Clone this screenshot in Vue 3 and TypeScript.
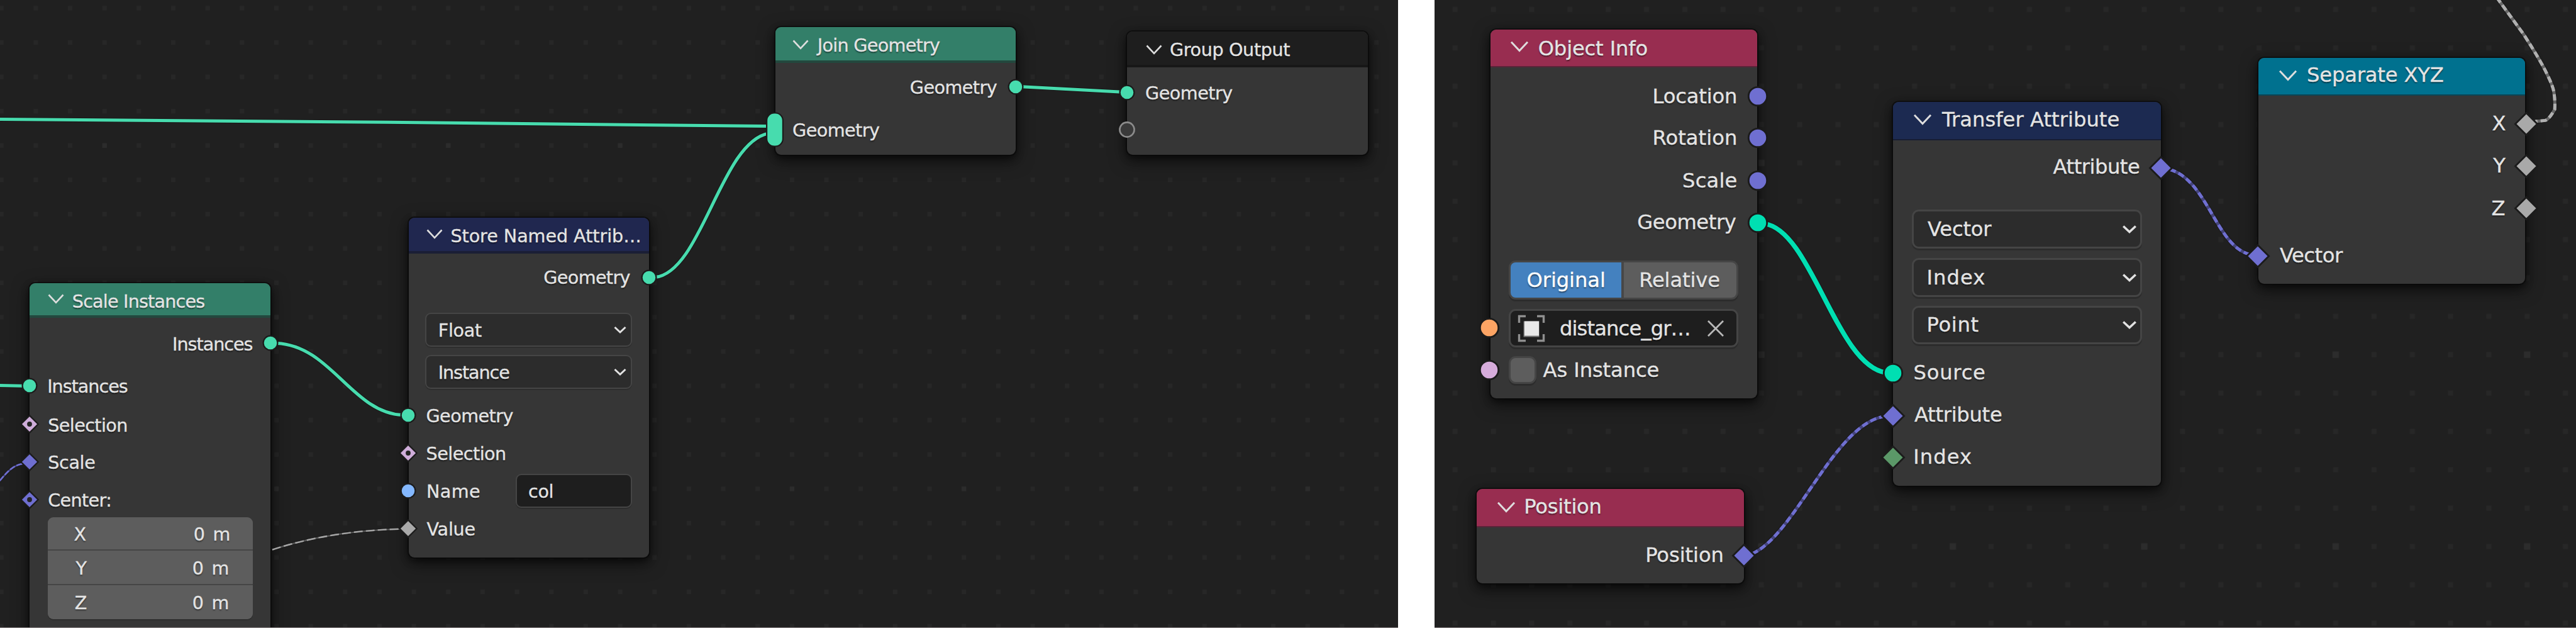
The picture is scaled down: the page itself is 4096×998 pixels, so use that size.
<script setup lang="ts">
type Shape = 'circle' | 'diamond' | 'hollow' | 'pill' | 'empty'
type Kind = 'text' | 'select' | 'stack' | 'name' | 'toggle' | 'object' | 'check'

/** A piece of text: left edge and width of its ink, in canvas pixels. */
interface Label { t: string; x: number; w: number }
interface Socket { x: number; y: number; shape: Shape; color: string }
interface Row { kind: Kind; cy: number; h: number; labels: Label[]; box?: [number, number]; values?: { cy: number; a: Label; b: Label }[] }
interface GraphNode {
  x: number; y: number; w: number; h: number; head: number; color: string; edge: string
  title: Label; titleY: number; chev: [number, number]; rows: Row[]; sockets: Socket[]
}
interface Link { d: string; color: string; width: number; dash?: string; base?: string }
interface Board {
  id: string; left: number; width: number; font: number; node: GraphNode[]; links: Link[]
  grid: { x: number; y: number; px: number; py: number; size: number; ex: number; ey: number; big: number }
}

const MINT = '#47dcae', JADE = '#00dfb2', VIOLET = '#6f6fd1', PINK = '#cfadda', GREY = '#a9a9a9'
const ctx = document.createElement('canvas').getContext('2d')!

function ink(l: Label, size: number, origin: number) {
  ctx.font = `${size}px "DejaVu Sans"`
  const m = ctx.measureText(l.t)
  const natural = m.actualBoundingBoxLeft + m.actualBoundingBoxRight
  const gap = l.t.length > 1 ? (l.w - natural) / (l.t.length - 1) : 0
  return {
    marginLeft: `${l.x - origin}px`,
    width: `${l.w}px`,
    textIndent: `${m.actualBoundingBoxLeft}px`,
    letterSpacing: `${gap}px`,
  }
}

function rowStyle(n: GraphNode, i: number) {
  const r = n.rows[i]
  const prev = i === 0 ? n.y + n.head : n.rows[i - 1].cy + n.rows[i - 1].h / 2
  return { marginTop: `${r.cy - r.h / 2 - prev}px`, height: `${r.h}px` }
}
const boxStyle = (n: GraphNode, r: Row) => ({ marginLeft: `${r.box![0] - n.x}px`, width: `${r.box![1]}px` })

const text = (t: string, x: number, w: number, cy: number): Row => ({ kind: 'text', cy, h: 38, labels: [{ t, x, w }] })
const select = (t: string, x: number, w: number, cy: number, h: number, bx: number, bw: number): Row =>
  ({ kind: 'select', cy, h, labels: [{ t, x, w }], box: [bx, bw] })
const sock = (x: number, y: number, shape: Shape, color: string): Socket => ({ x, y, shape, color })

const boards: Board[] = [
  {
    id: 'left', left: 0, width: 2223, font: 28.6,
    grid: { x: 2.2, y: 13, px: 54.66, py: 54.56, size: 7, ex: 3, ey: 4, big: 7 },
    links: [
      { d: 'M-10 189.5 C300 190.8 900 197 1222 200.5', color: MINT, width: 5 },
      { d: 'M-10 612.2 L47 613.4', color: MINT, width: 5 },
      { d: 'M440 545.4 C526 549 560 656 640 659.6', color: MINT, width: 5 },
      { d: 'M1042 440.6 C1116 432 1146 226 1222 212', color: MINT, width: 5 },
      { d: 'M1624 137.8 L1784 146.3', color: MINT, width: 5 },
      { d: 'M-8 773 C6 757 18 738 38 737', color: VIOLET, width: 2.6, base: '#4c4c8c', dash: '9 3' },
      { d: 'M433 873.6 C490 855 560 842 642 840.6', color: '#a4a4a4', width: 2.4, base: '#565656', dash: '14 5' },
    ],
    node: [
      {
        x: 47.4, y: 449.5, w: 382.4, h: 600, head: 55.5, color: '#337f69', edge: '#23483e',
        title: { t: 'Scale Instances', x: 115.8, w: 209.5 }, titleY: 477.6, chev: [88.8, 475.4],
        rows: [
          text('Instances', 276, 125.6, 546), text('Instances', 77.2, 125.6, 612.7), text('Selection', 77.2, 124, 674.6),
          text('Scale', 77.2, 74, 734.4), text('Center:', 77.2, 98, 794.4),
          {
            kind: 'stack', cy: 903.5, h: 162, labels: [], box: [76.4, 325.4],
            values: [
              { cy: 849, a: { t: 'X', x: 117.4, w: 19.5 }, b: { t: '0 m', x: 308.8, w: 55.6 } },
              { cy: 902, a: { t: 'Y', x: 119.4, w: 19.5 }, b: { t: '0 m', x: 306.8, w: 55.6 } },
              { cy: 956.5, a: { t: 'Z', x: 119.8, w: 19.5 }, b: { t: '0 m', x: 306.8, w: 55.6 } },
            ],
          },
        ],
        sockets: [
          sock(429.8, 545, 'circle', MINT), sock(47.2, 613.4, 'circle', MINT), sock(47.2, 673.9, 'hollow', PINK),
          sock(47.2, 734, 'diamond', VIOLET), sock(47.2, 794, 'hollow', VIOLET),
        ],
      },
      {
        x: 649.6, y: 345.6, w: 382.2, h: 540.4, head: 57.2, color: '#20274f', edge: '#1a1e35',
        title: { t: 'Store Named Attrib…', x: 717.4, w: 299.8 }, titleY: 373.8, chev: [690.6, 372.2],
        rows: [
          text('Geometry', 865.3, 137.3, 440.4),
          select('Float', 698.7, 67.4, 524, 54, 676.4, 328.7), select('Instance', 698.7, 111.5, 591.1, 54, 676.4, 328.7),
          text('Geometry', 678.5, 138, 660.2), text('Selection', 678.5, 124.6, 719.8),
          { kind: 'name', cy: 779.8, h: 54.5, labels: [{ t: 'Name', x: 680, w: 83 }, { t: 'col', x: 841, w: 37.6 }], box: [819.9, 185.2] },
          text('Value', 678.5, 77, 840.2),
        ],
        sockets: [
          sock(1031.8, 441.2, 'circle', MINT), sock(648.8, 660.2, 'circle', MINT), sock(648.8, 720, 'hollow', PINK),
          sock(648.8, 780.4, 'circle', '#84b8ff'), sock(648.8, 840.4, 'diamond', GREY),
        ],
      },
      {
        x: 1232.5, y: 43, w: 382, h: 203, head: 57, color: '#337f69', edge: '#23483e',
        title: { t: 'Join Geometry', x: 1297.8, w: 197.3 }, titleY: 70.6, chev: [1273.1, 71.4],
        rows: [text('Geometry', 1447.8, 138, 137.6), text('Geometry', 1261, 138, 206.5)],
        sockets: [sock(1614.5, 137.6, 'circle', MINT), sock(1231.8, 206.4, 'pill', MINT)],
      },
      {
        x: 1792.3, y: 50, w: 383, h: 196, head: 57, color: '#1e1e1e', edge: '#171717',
        title: { t: 'Group Output', x: 1861, w: 190.3 }, titleY: 77.8, chev: [1834.6, 78.6],
        rows: [text('Geometry', 1822, 138.3, 146.5)],
        sockets: [sock(1792.3, 146.6, 'circle', MINT), sock(1792.3, 206.4, 'empty', '#8c8c8c')],
      },
    ],
  },
  {
    id: 'right', left: 2281, width: 1815, font: 32.2,
    grid: { x: 2313.7, y: 15.1, px: 60.88, py: 60.95, size: 8, ex: 3, ey: 4, big: 10 },
    links: [
      { d: 'M2806 355.6 C2880 366 2920 580 2998 592', color: JADE, width: 7.4 },
      { d: 'M2786 880 C2855 850 2918 671 2998 661.6', color: VIOLET, width: 5, base: '#45457c', dash: '10 5' },
      { d: 'M3450 269.4 C3510 286 3524 392 3578 404.6', color: VIOLET, width: 5, base: '#45457c', dash: '10 5' },
      { d: 'M3970 -4 L4012.6 54.3 Q4042 100 4050 118 Q4059 136 4060.8 146 Q4063 160 4062.2 173.7 Q4053 190 4047 191.4 L4031 193', color: '#b0b0b0', width: 5, base: '#686868', dash: '10 5' },
    ],
    node: [
      {
        x: 2370.3, y: 47.2, w: 423.8, h: 585.4, head: 60.2, color: '#982d50', edge: '#5a2439',
        title: { t: 'Object Info', x: 2446.7, w: 171.7 }, titleY: 76.9, chev: [2415.9, 74.4],
        rows: [
          text('Location', 2630.5, 129.5, 153), text('Rotation', 2630.5, 129.5, 219.2), text('Scale', 2677.1, 84.4, 287.3),
          text('Geometry', 2604.3, 156.4, 353),
          { kind: 'toggle', cy: 445, h: 61.6, labels: [{ t: 'Original', x: 2429, w: 121.4 }, { t: 'Relative', x: 2609.2, w: 125 }], box: [2399.5, 365] },
          { kind: 'object', cy: 522, h: 61, labels: [{ t: 'distance_gr…', x: 2480.9, w: 204.7 }], box: [2399.5, 365] },
          { kind: 'check', cy: 588, h: 43.4, labels: [{ t: 'As Instance', x: 2453.6, w: 184 }], box: [2399.5, 43.4] },
        ],
        sockets: [
          sock(2794.6, 152.8, 'circle', VIOLET), sock(2794.6, 219.2, 'circle', VIOLET), sock(2794.6, 287.4, 'circle', VIOLET),
          sock(2794.6, 353.9, 'circle', JADE), sock(2368.3, 521.5, 'circle', '#fca464'), sock(2368.3, 587.9, 'circle', '#d6acdb'),
        ],
      },
      {
        x: 2348.4, y: 777.4, w: 424.3, h: 149.2, head: 60.2, color: '#982d50', edge: '#5a2439',
        title: { t: 'Position', x: 2426.3, w: 118.3 }, titleY: 804.8, chev: [2394.7, 805.6],
        rows: [text('Position', 2619.2, 119.3, 881.8)],
        sockets: [sock(2773.4, 882.6, 'diamond', VIOLET)],
      },
      {
        x: 3010.4, y: 161.6, w: 425.2, h: 610.2, head: 61.2, color: '#1c2a51', edge: '#171d33',
        title: { t: 'Transfer Attribute', x: 3087, w: 282.5 }, titleY: 190, chev: [3056.7, 189.8],
        rows: [
          text('Attribute', 3264.6, 137.4, 265.4),
          select('Vector', 3065, 102.3, 364.2, 61.5, 3040.2, 365.5), select('Index', 3066.5, 88.8, 441.2, 61.5, 3040.2, 365.5),
          select('Point', 3066.5, 79, 516.4, 61.5, 3040.2, 365.5),
          text('Source', 3044.6, 111.5, 592.5), text('Attribute', 3043.9, 139, 659.2), text('Index', 3045.3, 88.8, 725.8),
        ],
        sockets: [
          sock(3436.4, 267, 'diamond', VIOLET), sock(3009.7, 592.8, 'circle', JADE), sock(3009.7, 660.7, 'diamond', VIOLET),
          sock(3009.7, 727.3, 'diamond', '#5b9868'),
        ],
      },
      {
        x: 3590.9, y: 92.2, w: 424.4, h: 359.1, head: 59.4, color: '#00718f', edge: '#0a4555',
        title: { t: 'Separate XYZ', x: 3670.1, w: 214.7 }, titleY: 119.4, chev: [3637.6, 119.9],
        rows: [
          text('X', 3962.5, 20.7, 195.7), text('Y', 3963.2, 20, 263.5), text('Z', 3962.5, 20.7, 331.3), text('Vector', 3625, 101, 406.3),
        ],
        sockets: [
          sock(4016.8, 196.7, 'diamond', GREY), sock(4016.8, 264, 'diamond', GREY), sock(4016.8, 331.4, 'diamond', GREY),
          sock(3590.4, 406.9, 'diamond', VIOLET),
        ],
      },
    ],
  },
]
</script>

<template>
  <main class="sheet">
    <section v-for="b in boards" :key="b.id" class="board" :class="b.id" :style="{ width: b.width + 'px' }">
      <div class="plane" :style="{ left: -b.left + 'px' }">
        <svg class="layer" width="4096" height="998">
          <defs>
            <pattern :id="'dots-' + b.id" patternUnits="userSpaceOnUse" :x="b.grid.x - b.grid.px / 2" :y="b.grid.y - b.grid.py / 2" :width="b.grid.px" :height="b.grid.py">
              <rect :x="(b.grid.px - b.grid.size) / 2" :y="(b.grid.py - b.grid.size) / 2" :width="b.grid.size" :height="b.grid.size" fill="#272727" />
            </pattern>
            <pattern :id="'major-' + b.id" patternUnits="userSpaceOnUse" :x="b.grid.x + b.grid.px * (b.grid.ex - 0.5)" :y="b.grid.y + b.grid.py * (b.grid.ey - 0.5)" :width="b.grid.px * 5" :height="b.grid.py * 5">
              <rect :x="(b.grid.px - b.grid.big) / 2" :y="(b.grid.py - b.grid.big) / 2" :width="b.grid.big" :height="b.grid.big" fill="#2c2c2c" />
            </pattern>
          </defs>
          <rect width="4096" height="998" :fill="`url(#dots-${b.id})`" />
          <rect width="4096" height="998" :fill="`url(#major-${b.id})`" />
        </svg>

        <article v-for="(n, ni) in b.node" :key="ni" class="node" :style="{ left: n.x + 'px', top: n.y + 'px', width: n.w + 'px', height: n.h + 'px', fontSize: b.font + 'px' }">
          <header class="head" :style="{ height: n.head + 'px', background: n.color, borderBottomColor: n.edge }">
            <svg class="chev" width="34" height="24" viewBox="-17 -12 34 24" :style="{ left: n.chev[0] - n.x - 17 + 'px', top: n.chev[1] - n.y - 12 + 'px' }">
              <path d="M-11.5 -6.5 L0 5.8 L11.5 -6.5" />
            </svg>
            <span class="label title" :style="{ ...ink(n.title, b.font, n.x), top: n.titleY - n.y - 20 + 'px' }">{{ n.title.t }}</span>
          </header>

          <div v-for="(r, i) in n.rows" :key="i" class="row" :style="rowStyle(n, i)">
            <span v-if="r.kind === 'text'" class="label" :style="ink(r.labels[0], b.font, n.x)">{{ r.labels[0].t }}</span>

            <div v-else-if="r.kind === 'select'" class="box dark" :style="boxStyle(n, r)">
              <span class="label" :style="ink(r.labels[0], b.font, r.box![0] + (b.id === 'left' ? 2 : 3))">{{ r.labels[0].t }}</span>
              <svg class="arrow" width="24" height="18" viewBox="-12 -9 24 18"><path d="M-8.5 -4 L0 4 L8.5 -4" /></svg>
            </div>

            <div v-else-if="r.kind === 'stack'" class="stack" :style="boxStyle(n, r)">
              <div v-for="v in r.values" :key="v.a.t" class="num">
                <span class="label" :style="ink(v.a, b.font, r.box![0])">{{ v.a.t }}</span>
                <span class="label" :style="ink(v.b, b.font, v.a.x + v.a.w)">{{ v.b.t }}</span>
              </div>
            </div>

            <template v-else-if="r.kind === 'name'">
              <span class="label" :style="ink(r.labels[0], b.font, n.x)">{{ r.labels[0].t }}</span>
              <div class="box deep" :style="{ marginLeft: r.box![0] - r.labels[0].x - r.labels[0].w + 'px', width: r.box![1] + 'px' }">
                <span class="label" :style="ink(r.labels[1], b.font, r.box![0] + 2)">{{ r.labels[1].t }}</span>
              </div>
            </template>

            <div v-else-if="r.kind === 'toggle'" class="box toggle" :style="boxStyle(n, r)">
              <div class="seg on"><span class="label" :style="ink(r.labels[0], b.font, 2403)">{{ r.labels[0].t }}</span></div>
              <div class="seg"><span class="label" :style="ink(r.labels[1], b.font, 2582)">{{ r.labels[1].t }}</span></div>
            </div>

            <div v-else-if="r.kind === 'object'" class="box deep" :style="boxStyle(n, r)">
              <svg class="mesh" width="44" height="44" viewBox="0 0 44 44">
                <path d="M2.5 13 V2.5 H13 M31 2.5 H41.5 V13 M41.5 31 V41.5 H31 M13 41.5 H2.5 V31" />
                <rect x="9.5" y="10.5" width="25" height="25" fill="#7b7b7b" />
                <rect x="11" y="10.5" width="23" height="23" fill="#e8e8e8" />
              </svg>
              <span class="label" :style="ink(r.labels[0], b.font, 2458.5)">{{ r.labels[0].t }}</span>
              <svg class="clear" width="28" height="28" viewBox="-14 -14 28 28"><path d="M-12 -12 L12 12 M12 -12 L-12 12" /></svg>
            </div>

            <template v-else>
              <div class="box tick" :style="boxStyle(n, r)"></div>
              <span class="label" :style="ink(r.labels[0], b.font, r.box![0] + r.box![1])">{{ r.labels[0].t }}</span>
            </template>
          </div>

          <svg v-for="(s, si) in n.sockets" :key="'s' + si" class="socket" width="60" height="60" viewBox="-30 -30 60 60" :style="{ left: s.x - n.x - 30 + 'px', top: s.y - n.y - 30 + 'px' }">
            <g :transform="b.id === 'right' ? 'scale(1.29)' : undefined">
              <circle v-if="s.shape === 'circle'" r="11.4" :fill="s.color" stroke="#1b1b1b" stroke-width="2.2" />
              <path v-else-if="s.shape === 'diamond' || s.shape === 'hollow'" d="M0 -13.6 L13.6 0 L0 13.6 L-13.6 0 Z" :fill="s.color" stroke="#1b1b1b" stroke-width="2.2" />
              <rect v-else-if="s.shape === 'pill'" x="-12.9" y="-26.5" width="25.8" height="53" rx="12" :fill="s.color" stroke="#1b1b1b" stroke-width="2.2" />
              <circle v-else r="11.6" fill="#3a3a3a" :stroke="s.color" stroke-width="2.6" />
              <circle v-if="s.shape === 'hollow'" r="3.9" fill="#232323" />
            </g>
          </svg>
        </article>

        <svg class="layer wires" width="4096" height="998">
          <template v-for="(l, li) in b.links" :key="li">
            <path :d="l.d" stroke="#181818" :stroke-width="l.width + 2.5" opacity="0.6" />
            <path v-if="l.base" :d="l.d" :stroke="l.base" :stroke-width="l.width" />
            <path :d="l.d" :stroke="l.color" :stroke-width="l.width" :stroke-dasharray="l.dash" />
          </template>
        </svg>
      </div>
    </section>
  </main>
</template>

<style>
html,
body {
  margin: 0;
  background: #fff;
  overflow: hidden;
}
</style>

<style scoped>
.sheet {
  display: flex;
  justify-content: space-between;
  width: 4096px;
  height: 998px;
  background: #fff;
  font-family: "DejaVu Sans", sans-serif;
  color: #e4e4e4;
}
.board {
  position: relative;
  box-sizing: border-box;
  height: 998px;
  overflow: hidden;
  background: #202020;
}
.board::after {
  content: "";
  position: absolute;
  inset: auto 0 0 0;
  height: 1.4px;
  background: #8d8788;
  z-index: 5;
}
.plane {
  position: absolute;
  top: 0;
  width: 4096px;
  height: 998px;
}
.layer {
  position: absolute;
  left: 0;
  top: 0;
}
.wires {
  z-index: 2;
  fill: none;
}
.wires path {
  fill: none;
}
.node {
  position: absolute;
  background: #363636;
  border-radius: 9px;
  box-shadow: 0 0 0 1.8px rgba(10, 10, 10, 0.75), 0 5px 12px rgba(0, 0, 0, 0.5), 0 8px 26px 2px rgba(0, 0, 0, 0.5);
}
.head {
  position: relative;
  box-sizing: border-box;
  border-bottom: 3px solid;
  border-radius: 9px 9px 0 0;
}
.left .head {
  border-bottom-width: 4px;
}
.right .head {
  border-bottom-width: 2px;
}
.chev {
  position: absolute;
}
.chev path {
  fill: none;
  stroke: #dedede;
  stroke-width: 2.6;
}
.right .chev {
  transform: scale(1.13);
}
.label {
  display: block;
  flex: none;
  height: 40px;
  line-height: 40px;
  white-space: nowrap;
  -webkit-text-stroke: 0.35px currentColor;
  text-shadow: 0 2px 2px rgba(0, 0, 0, 0.5);
}
.left .label {
  line-height: 42px;
}
.title {
  position: absolute;
  left: 0;
}
.row {
  display: flex;
  align-items: center;
}
.box {
  flex: none;
  display: flex;
  align-items: center;
  box-sizing: border-box;
  height: 100%;
  border: 2px solid #454545;
  border-radius: 9px;
  box-shadow: 0 2px 0 rgba(0, 0, 0, 0.15);
}
.right .box {
  border-width: 3px;
  border-radius: 11px;
  box-shadow: 0 3px 0 rgba(0, 0, 0, 0.18);
}
.dark {
  background: #2c2c2c;
}
.deep {
  background: #1e1e1e;
}
.arrow {
  margin-left: auto;
  margin-right: 5px;
}
.right .arrow {
  margin-right: 5px;
  transform: scale(1.15);
}
.arrow path {
  fill: none;
  stroke: #e2e2e2;
  stroke-width: 3;
}
.stack {
  height: 100%;
  display: grid;
  grid-template-rows: 51px 53px 54px;
  gap: 2px;
  background: #454545;
  border-radius: 9px;
  overflow: hidden;
  box-shadow: 0 2px 0 rgba(0, 0, 0, 0.15);
}
.num {
  display: flex;
  align-items: center;
  background: #5d5d5d;
}
.toggle {
  align-items: stretch;
  gap: 3.5px;
  background: #474747;
}
.seg {
  display: flex;
  align-items: center;
  flex: 1;
  background: #5d5d5d;
  border-radius: 0 8px 8px 0;
}
.seg.on {
  flex: none;
  width: 176px;
  background: #4481bf;
  border-radius: 8px 0 0 8px;
  color: #fff;
}
.tick {
  background: #5d5d5d;
}
.mesh {
  flex: none;
  margin-left: 11px;
  margin-right: 1px;
}
.mesh path {
  fill: none;
  stroke: #8f8f8f;
  stroke-width: 3.4;
}
.clear {
  flex: none;
  margin-left: auto;
  margin-right: 19px;
}
.clear path {
  stroke: #b9b9b9;
  stroke-width: 2.8;
}
.socket {
  position: absolute;
  z-index: 3;
  overflow: visible;
}
</style>
